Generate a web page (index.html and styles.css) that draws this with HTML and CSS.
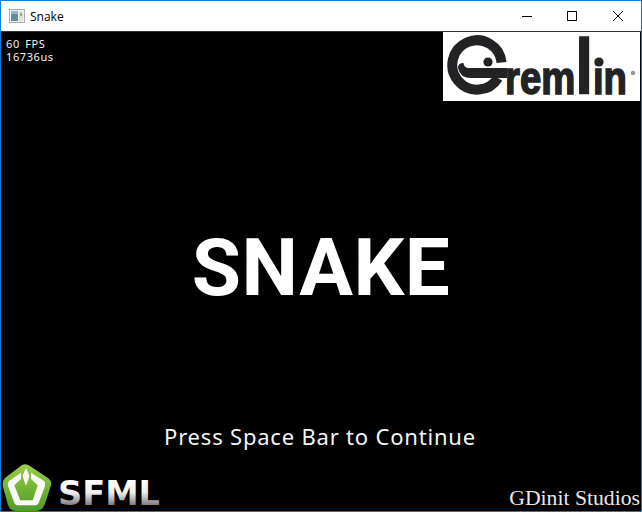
FILE: index.html
```html
<!DOCTYPE html>
<html lang="en">
<head>
<meta charset="utf-8">
<title>Snake</title>
<link rel="stylesheet" href="styles.css">
</head>
<body>
<div class="window">
  <header class="titlebar">
    <svg class="app-icon" width="16" height="16" viewBox="0 0 16 16">
      <rect x="0.5" y="1.5" width="15" height="13" fill="#f2f2f2" stroke="#a9a9a9"/>
      <rect x="2" y="3" width="7" height="10" fill="#5f9298"/>
      <rect x="2" y="3" width="7" height="3" fill="#9db4c4"/>
      <rect x="10" y="3" width="4" height="10" fill="#d9e2d8"/>
      <rect x="11" y="5" width="2" height="3" fill="#8fb08a"/>
    </svg>
    <span class="title">Snake</span>
    <div class="controls">
      <span class="control"><svg width="10" height="10" viewBox="0 0 10 10"><path d="M0 5.5H10" stroke="#000" fill="none"/></svg></span>
      <span class="control control-wide"><svg width="10" height="10" viewBox="0 0 10 10"><rect x="0.5" y="0.5" width="9" height="9" stroke="#000" fill="none"/></svg></span>
      <span class="control"><svg width="10" height="10" viewBox="0 0 10 10"><path d="M0 0L10 10M10 0L0 10" stroke="#000" stroke-width="1" fill="none"/></svg></span>
    </div>
  </header>
  <main class="game">
    <div class="stats">
      <div>60 FPS</div>
      <div>16736us</div>
    </div>
    <div class="gremlin">
      <svg width="197" height="69" viewBox="0 0 197 69">
        <path d="M58.600 30.500 A24.700 24.700 0 1 0 55 46" fill="none" stroke="#232326" stroke-width="10"/>
        <path d="M20.500 31 Q21 36 26 36 H64 V46 H28 Q17 46 15 36 Q15 31 20.500 31 Z" fill="#232326"/>
        <circle cx="45" cy="30" r="4.600" fill="#232326"/>
        <text class="gremlin-word" x="62" y="62" textLength="122" lengthAdjust="spacingAndGlyphs">rem<tspan class="gremlin-tall">l</tspan>in</text>
        <circle cx="156" cy="30" r="4.600" fill="#232326"/>
        <circle cx="190" cy="41" r="2.200" fill="#999"/>
      </svg>
    </div>
    <h1 class="headline">SNAKE</h1>
    <p class="prompt">Press Space Bar to Continue</p>
    <div class="sfml">
      <svg width="160" height="49" viewBox="0 0 160 49">
        <defs>
          <linearGradient id="sfml-metal" gradientUnits="userSpaceOnUse" x1="0" y1="17" x2="0" y2="42">
            <stop offset="0" stop-color="#ffffff"/>
            <stop offset="0.5" stop-color="#eeeeee"/>
            <stop offset="1" stop-color="#7d7d7d"/>
          </linearGradient>
          <linearGradient id="sfml-green" x1="0" y1="0" x2="0" y2="1">
            <stop offset="0" stop-color="#9ccf45"/>
            <stop offset="1" stop-color="#4f9a26"/>
          </linearGradient>
        </defs>
        <path d="M21 2 Q25 0 29 3 L47 15 Q51 18 50 22 L44 41 Q42 47 36 48 H15 Q9 48 7 42 L2 24 Q1 18 4 15 Z" fill="url(#sfml-green)"/>
        <path d="M20 9.700 L8 18 Q6 20 7 23 L13 39 Q14 42.300 17 42.300 H34 Q37 42.300 38 39 L44 23 Q45 20 43 18 L30 9.700 L30 16 L36.700 22.300 L31.700 37.300 H19.300 L13.300 22.300 L20 16 Z" fill="#f7f9f2"/>
        <path d="M24 7 Q25 4.500 26 7 L28.500 13 L25 23 L21.500 13 Z" fill="#f7f9f2"/>
        <text class="sfml-word" x="57" y="42" textLength="102" lengthAdjust="spacingAndGlyphs" fill="url(#sfml-metal)">SFML</text>
      </svg>
    </div>
    <div class="studio">GDinit Studios</div>
  </main>
</div>
</body>
</html>
```
FILE: styles.css
```css
html, body {
  margin: 0;
  padding: 0;
  background: #000;
}

.window {
  box-sizing: border-box;
  width: 642px;
  height: 512px;
  display: flex;
  flex-direction: column;
  border: 1px solid #0f80d8;
  background: #000;
  overflow: hidden;
}

.titlebar {
  flex: 0 0 30px;
  display: flex;
  align-items: center;
  background: #fff;
  padding-left: 8px;
}

.app-icon {
  margin-right: 5px;
}

.title {
  font: 12px "Open Sans", "Liberation Sans", sans-serif;
  color: #000;
}

.controls {
  margin-left: auto;
  display: flex;
}

.control {
  box-sizing: border-box;
  width: 45px;
  height: 29px;
  padding-left: 17px;
  display: flex;
  align-items: center;
}

.control-wide {
  width: 46px;
}

.game {
  position: relative;
  flex: 1;
  background: #000;
  color: #fff;
  border-top: 1px solid #333;
}

.stats {
  position: absolute;
  left: 5px;
  top: 5px;
  font: 11px/13px "Noto Sans", sans-serif;
  letter-spacing: 0.6px;
  word-spacing: 2px;
  color: #f4f4f4;
}

.gremlin {
  position: absolute;
  left: 442px;
  top: 0;
  width: 197px;
  height: 69px;
  background: #fff;
}

.gremlin svg,
.sfml svg {
  display: block;
}

.gremlin-word {
  font: 700 46px "Liberation Sans", sans-serif;
  fill: #232326;
  stroke: #232326;
  stroke-width: 1.6px;
}

.gremlin-tall {
  font-size: 77px;
}

.headline {
  position: absolute;
  left: 0;
  right: 0;
  top: 191px;
  margin: 0;
  text-align: center;
  font: 700 80px/90px Roboto, "Liberation Sans", sans-serif;
  letter-spacing: 0.5px;
  color: #fff;
}

.prompt {
  position: absolute;
  left: 0;
  right: 2px;
  top: 389px;
  margin: 0;
  text-align: center;
  font: 400 22px/30px "Noto Sans", sans-serif;
  letter-spacing: 0.8px;
  color: #f4f4f4;
}

.sfml {
  position: absolute;
  left: 0;
  top: 431px;
}

.sfml-word {
  font: 700 34px "DejaVu Sans", sans-serif;
}

.studio {
  position: absolute;
  right: 1px;
  bottom: 1px;
  font: 400 21.7px/24px "Liberation Serif", serif;
  color: #e8e8e8;
}
```
